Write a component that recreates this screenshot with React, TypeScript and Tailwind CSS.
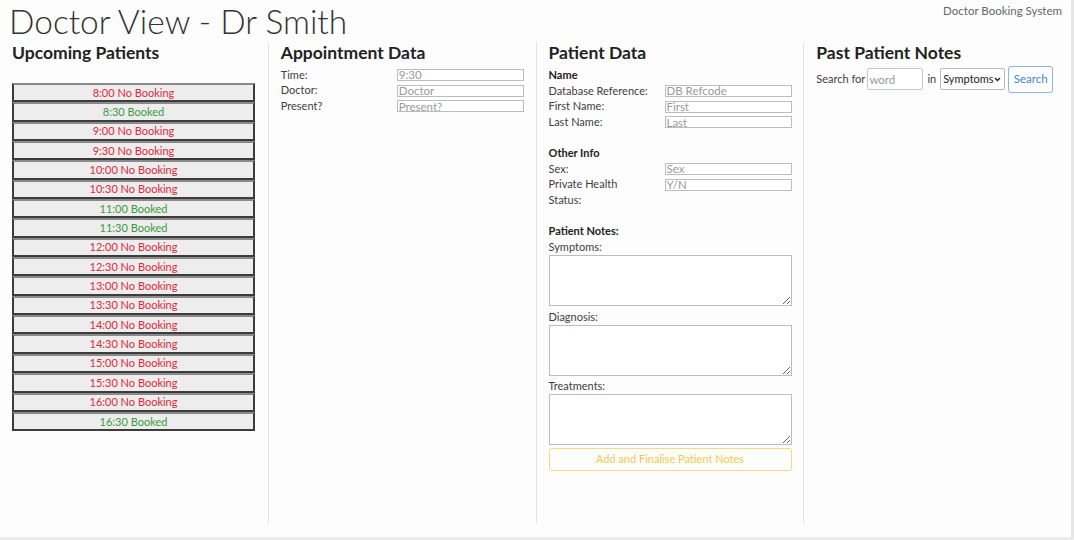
const slots = [
  { time: "8:00", booked: false },
  { time: "8:30", booked: true },
  { time: "9:00", booked: false },
  { time: "9:30", booked: false },
  { time: "10:00", booked: false },
  { time: "10:30", booked: false },
  { time: "11:00", booked: true },
  { time: "11:30", booked: true },
  { time: "12:00", booked: false },
  { time: "12:30", booked: false },
  { time: "13:00", booked: false },
  { time: "13:30", booked: false },
  { time: "14:00", booked: false },
  { time: "14:30", booked: false },
  { time: "15:00", booked: false },
  { time: "15:30", booked: false },
  { time: "16:00", booked: false },
  { time: "16:30", booked: true },
];

const Field = ({ label, placeholder }: { label: string; placeholder?: string }) => (
  <div className="flex items-center h-[15.7px]">
    <span className="w-[116px] shrink-0">{label}</span>
    {placeholder !== undefined && (
      <input
        readOnly
        placeholder={placeholder}
        className="w-[127px] h-[12px] border border-[#bdbdbd] bg-white px-[1px] text-[11.5px] leading-[10px] placeholder:text-[#9a9a9a] outline-none"
      />
    )}
  </div>
);

const NoteBox = ({ label }: { label: string }) => (
  <div className="flex flex-col">
    <span className="h-[16px] leading-[16px]">{label}</span>
    <textarea readOnly className="w-[243px] h-[51px] border border-[#bdbdbd] bg-white" />
  </div>
);

export default function App() {
  return (
    <div
      className="w-[1074px] h-[540px] bg-[#fdfdfd] flex flex-col text-[#404040] overflow-hidden"
      style={{ fontFamily: 'Lato, "Noto Sans", sans-serif' }}
    >
      <div className="flex flex-1 min-h-0 border-r-[3px] border-[#e6e6e6]">
        <div className="flex-1 flex flex-col">
          {/* Header */}
          <div className="flex justify-between items-start h-[42px]">
            <h1 className="pl-[9px] text-[33.5px] font-light leading-[42px] text-[#333]">
              Doctor View - Dr Smith
            </h1>
            <span className="pr-[9px] pt-[2px] text-[11.5px] text-[#666]">Doctor Booking System</span>
          </div>

          <div className="grid grid-cols-4 h-[481px] text-[11px]">
            {/* Upcoming Patients */}
            <div className="px-[12px]">
              <h2 className="text-[17.5px] font-bold text-[#222] leading-[22px] mb-[19px]">Upcoming Patients</h2>
              <div className="flex flex-col w-[243px]">
                {slots.map((s) => (
                  <button
                    key={s.time}
                    className={`h-[19.35px] bg-[#ededed] border-2 border-[#3c3c3c] border-t-[#8a8a8a] text-[11px] leading-[14px] ${
                      s.booked ? "text-[#3c9a3c]" : "text-[#e0283a]"
                    }`}
                  >
                    {s.time} {s.booked ? "Booked" : "No Booking"}
                  </button>
                ))}
              </div>
            </div>

            {/* Appointment Data */}
            <div className="border-l border-[#e3e3e3] px-[12px]">
              <h2 className="text-[17.5px] font-bold text-[#222] leading-[22px] mb-[3px]">Appointment Data</h2>
              <Field label="Time:" placeholder="9:30" />
              <Field label="Doctor:" placeholder="Doctor" />
              <Field label="Present?" placeholder="Present?" />
            </div>

            {/* Patient Data */}
            <div className="border-l border-[#e3e3e3] px-[12px]">
              <h2 className="text-[17.5px] font-bold text-[#222] leading-[22px] mb-[3px]">Patient Data</h2>
              <div className="font-bold text-[#222] h-[16px] leading-[16px]">Name</div>
              <Field label="Database Reference:" placeholder="DB Refcode" />
              <Field label="First Name:" placeholder="First" />
              <Field label="Last Name:" placeholder="Last" />
              <div className="font-bold text-[#222] h-[16px] leading-[16px] mt-[15px]">Other Info</div>
              <Field label="Sex:" placeholder="Sex" />
              <Field label="Private Health" placeholder="Y/N" />
              <Field label="Status:" />
              <div className="font-bold text-[#222] h-[16px] leading-[16px] mt-[15px]">Patient Notes:</div>
              <div className="flex flex-col gap-[2.5px]">
                <NoteBox label="Symptoms:" />
                <NoteBox label="Diagnosis:" />
                <NoteBox label="Treatments:" />
              </div>
              <button className="mt-[3px] w-[243px] h-[23px] border border-[#f5db7c] rounded-[2px] text-[#f0c94a] text-[11px]">
                Add and Finalise Patient Notes
              </button>
            </div>

            {/* Past Patient Notes */}
            <div className="border-l border-[#e3e3e3] px-[12px]">
              <h2 className="text-[17.5px] font-bold text-[#222] leading-[22px] mb-[1px]">Past Patient Notes</h2>
              <div className="flex items-center h-[28px] whitespace-nowrap">
                <span>Search for</span>
                <input
                  readOnly
                  placeholder="word"
                  className="ml-[2px] w-[56px] h-[22px] border border-[#c8c8c8] rounded-[2px] bg-white px-[1px] text-[11.5px] placeholder:text-[#9a9a9a] outline-none"
                />
                <span className="ml-[4px]">in</span>
                <div className="relative ml-[4px] w-[65px] h-[22px]">
                  <select className="appearance-none w-full h-full border border-[#bbb] rounded-[2px] bg-white pl-[2px] text-[11px] text-[#222] outline-none">
                    <option>Symptoms</option>
                    <option>Diagnosis</option>
                    <option>Treatments</option>
                  </select>
                  <svg className="absolute right-[4px] top-[9px] pointer-events-none" width="7" height="5" viewBox="0 0 7 5">
                    <path d="M1 1 L3.5 3.5 L6 1" fill="none" stroke="#222" strokeWidth="1.4" />
                  </svg>
                </div>
                <button className="ml-[3px] w-[45px] h-[27px] border border-[#8ab7e6] rounded-[3px] text-[#3d8ad6] text-[11.5px]">
                  Search
                </button>
              </div>
            </div>
          </div>
        </div>
      </div>
      <div className="h-[3px] bg-[#ebebeb]" />
    </div>
  );
}
